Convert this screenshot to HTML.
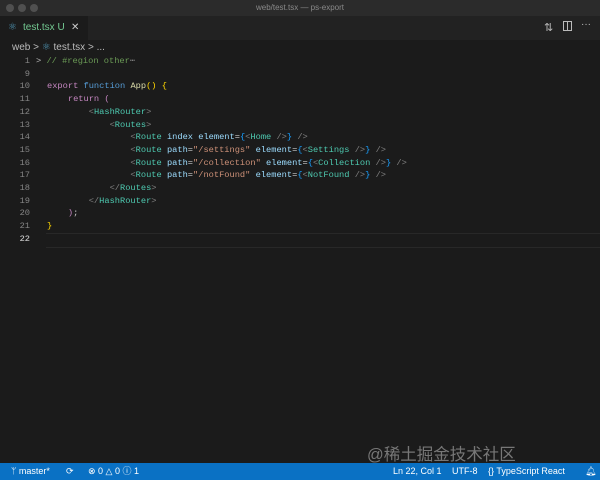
<!DOCTYPE html><html><head><style>
body{margin:0;width:600px;height:480px;background:#1b1b1b;overflow:hidden;font-family:"Liberation Sans",sans-serif;position:relative}
.t{position:absolute;left:0;top:0;width:600px;height:16px;background:#2b2b2b;color:#8a8a8a;font-size:8px;text-align:center;line-height:16px}
.d{position:absolute;top:4px;width:8px;height:8px;border-radius:50%;background:#505050}
.tb{position:absolute;top:16px;left:0;width:600px;height:24px;background:#222}
.tab{position:absolute;left:0;top:0;width:88px;height:24px;background:#1b1b1b;color:#73c991;font-size:10px;line-height:24px}
.bc{position:absolute;top:42px;left:12px;color:#bbb;font-size:10px}
.code{position:absolute;top:55px;left:0;font-family:"Liberation Mono",monospace;font-size:8.7px;line-height:12.7px;white-space:pre;color:#ccc}
.ln{position:absolute;left:0;width:30px;text-align:right;color:#858585}
.c{position:absolute;left:47px}
.k{color:#c586c0}.f{color:#569cd6}.n{color:#dcdcaa}.y{color:#ffd700}.g{color:#808080}.tg{color:#4ec9b0}.a{color:#9cdcfe}.s{color:#ce9178}.b{color:#179fff}.cm{color:#6a9955}
.sb{position:absolute;left:0;top:463px;width:600px;height:17px;background:#0a71c4;color:#fff;font-size:9px;line-height:17px}
.sb span{position:absolute}
</style></head><body>
<div class="t">web/test.tsx — ps-export</div>
<div class="d" style="left:6px"></div><div class="d" style="left:18px"></div><div class="d" style="left:30px"></div>
<div class="tb"><div class="tab"><span style="color:#519aba;position:absolute;left:8px">⚛</span><span style="position:absolute;left:23px">test.tsx U</span><span style="position:absolute;left:71px;color:#ccc">✕</span></div>
<span style="position:absolute;left:544px;top:5px;color:#bbb;font-size:11px">⇅</span>
<span style="position:absolute;left:563px;top:5px;width:9px;height:10px;border:1px solid #bbb;box-sizing:border-box"></span>
<span style="position:absolute;left:567px;top:5px;width:1px;height:10px;background:#bbb"></span>
<span style="position:absolute;left:581px;top:3px;color:#bbb;font-size:10px">···</span></div>
<div class="bc">web &gt; <span style="color:#519aba">⚛</span> test.tsx &gt; ...</div>
<div style="position:absolute;left:46px;top:233px;width:554px;height:13px;border-top:1px solid #282828;border-bottom:1px solid #282828"></div>
<div class="code">
<div class="ln" style="top:0">1</div><div class="ln" style="top:12.7px">9</div>
<div class="ln" style="top:25.4px">10</div><div class="ln" style="top:38.1px">11</div><div class="ln" style="top:50.8px">12</div><div class="ln" style="top:63.5px">13</div><div class="ln" style="top:76.2px">14</div><div class="ln" style="top:88.9px">15</div><div class="ln" style="top:101.6px">16</div><div class="ln" style="top:114.3px">17</div><div class="ln" style="top:127px">18</div><div class="ln" style="top:139.7px">19</div><div class="ln" style="top:152.4px">20</div><div class="ln" style="top:165.1px">21</div><div class="ln" style="top:177.8px;color:#ddd">22</div>
<div class="c" style="left:36px;top:0"><span style="color:#bbb">&gt;</span> <span class="cm">// #region other</span><span class="g">⋯</span></div>
<div class="c" style="top:25.4px"><span class="k">export</span> <span class="f">function</span> <span class="n">App</span><span class="y">()</span> <span class="y">{</span></div>
<div class="c" style="top:38.1px">    <span class="k">return</span> <span class="k">(</span></div>
<div class="c" style="top:50.8px">        <span class="g">&lt;</span><span class="tg">HashRouter</span><span class="g">&gt;</span></div>
<div class="c" style="top:63.5px">            <span class="g">&lt;</span><span class="tg">Routes</span><span class="g">&gt;</span></div>
<div class="c" style="top:76.2px">                <span class="g">&lt;</span><span class="tg">Route</span> <span class="a">index</span> <span class="a">element</span>=<span class="b">{</span><span class="g">&lt;</span><span class="tg">Home</span> <span class="g">/&gt;</span><span class="b">}</span> <span class="g">/&gt;</span></div>
<div class="c" style="top:88.9px">                <span class="g">&lt;</span><span class="tg">Route</span> <span class="a">path</span>=<span class="s">"/settings"</span> <span class="a">element</span>=<span class="b">{</span><span class="g">&lt;</span><span class="tg">Settings</span> <span class="g">/&gt;</span><span class="b">}</span> <span class="g">/&gt;</span></div>
<div class="c" style="top:101.6px">                <span class="g">&lt;</span><span class="tg">Route</span> <span class="a">path</span>=<span class="s">"/collection"</span> <span class="a">element</span>=<span class="b">{</span><span class="g">&lt;</span><span class="tg">Collection</span> <span class="g">/&gt;</span><span class="b">}</span> <span class="g">/&gt;</span></div>
<div class="c" style="top:114.3px">                <span class="g">&lt;</span><span class="tg">Route</span> <span class="a">path</span>=<span class="s">"/notFound"</span> <span class="a">element</span>=<span class="b">{</span><span class="g">&lt;</span><span class="tg">NotFound</span> <span class="g">/&gt;</span><span class="b">}</span> <span class="g">/&gt;</span></div>
<div class="c" style="top:127px">            <span class="g">&lt;/</span><span class="tg">Routes</span><span class="g">&gt;</span></div>
<div class="c" style="top:139.7px">        <span class="g">&lt;/</span><span class="tg">HashRouter</span><span class="g">&gt;</span></div>
<div class="c" style="top:152.4px">    <span class="k">)</span>;</div>
<div class="c" style="top:165.1px"><span class="y">}</span></div>
</div>
<div style="position:absolute;left:367px;top:441px;color:#777;font-size:16.5px;font-family:'Liberation Sans','Noto Sans CJK SC',sans-serif">@稀土掘金技术社区</div>
<div class="sb"><span style="left:11px">ᛘ master*</span><span style="left:66px">⟳</span><span style="left:88px">⊗ 0 △ 0 ⓘ 1</span>
<span style="left:393px">Ln 22, Col 1</span><span style="left:452px">UTF-8</span><span style="left:488px">{} TypeScript React</span><span style="left:585px">🔔︎</span></div>
</body></html>
